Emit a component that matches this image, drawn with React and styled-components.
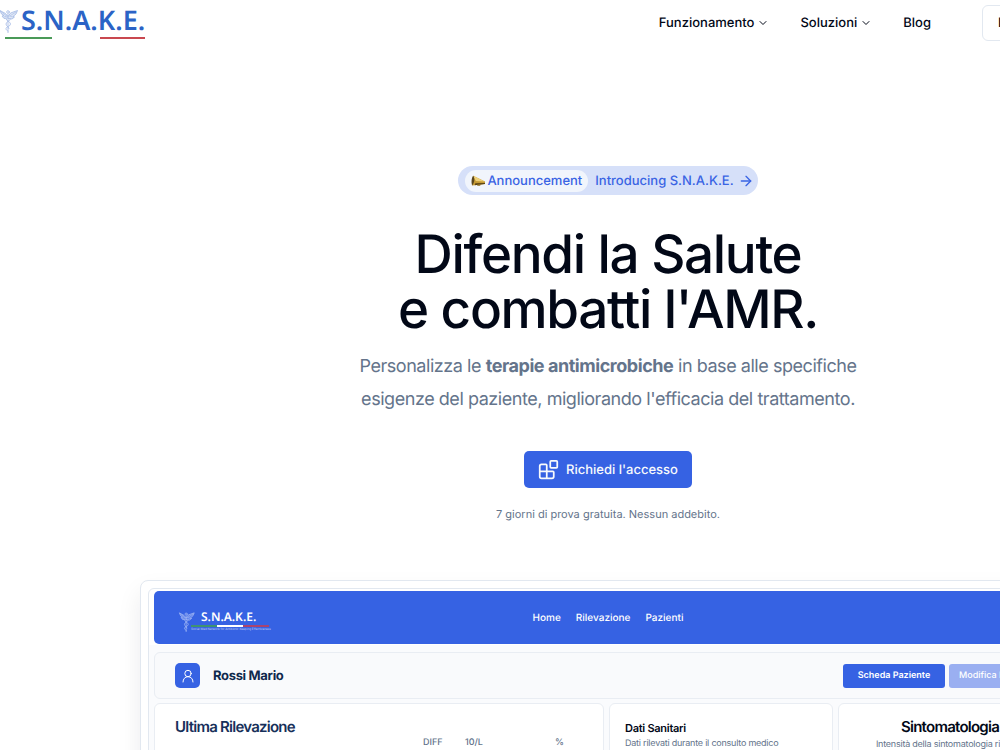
import React from "react";
import styled, { createGlobalStyle, css } from "styled-components";
import { ChevronDown, ArrowRight, Blocks } from "lucide-react";

const blue = "#3662e3";
const ink = "#020817";
const muted = "#64748b";
const line = "#e2e8f0";

const GlobalStyle = createGlobalStyle`
  *, *::before, *::after { box-sizing: border-box; }
  body { margin: 0; background: #fff; color: ${ink}; font-family: Inter, "Liberation Sans", sans-serif; text-rendering: geometricPrecision; }
  h1, h2, h3, p { margin: 0; }
  a { color: inherit; text-decoration: none; }
  button { font: inherit; text-rendering: inherit; border: 0; cursor: pointer; }
`;

const Page = styled.div`
  height: 100vh;
  overflow: hidden;
`;

const Canvas = styled.div`
  min-width: 1216px;
`;

const Header = styled.header`
  display: flex;
  align-items: center;
  justify-content: space-between;
  height: 46px;
`;

const Brand = styled.a`
  display: flex;
  align-items: flex-start;
  height: 40px;

  svg { margin-top: 3px; }
`;

const BrandName = styled.span`
  display: block;
  font-family: "Noto Sans", sans-serif;
  font-weight: 600;
  color: ${(p) => (p.$light ? "#fff" : "#2b63c6")};
  font-size: ${(p) => (p.$light ? 12 : 27)}px;
  line-height: ${(p) => (p.$light ? 16 : 34)}px;
  padding-left: ${(p) => (p.$light ? 10 : 3)}px;
`;

const BrandText = styled.span`
  display: block;
`;

const Flag = styled.span`
  display: grid;
  grid-template-columns: 47px 48px 45px;
  height: 2px;
  margin-left: -13px;

  i:nth-child(1) { background: #4a9a58; }
  i:nth-child(3) { background: #c94850; }
`;

const Nav = styled.nav`
  display: flex;
  align-items: center;
  gap: 31px;
  font-size: 13px;
  font-weight: 500;
  line-height: 21px;
  padding-right: 80px;
`;

const NavButton = styled.button`
  display: flex;
  align-items: center;
  gap: 3px;
  padding: 0;
  background: none;
  color: inherit;
`;

const LoginButton = styled.button`
  height: 36px;
  width: 154px;
  margin-left: 20px;
  padding: 0 15px;
  border: 1px solid ${line};
  border-radius: 6px;
  background: #fff;
  color: inherit;
  text-align: left;
`;

const Hero = styled.section`
  display: flex;
  flex-direction: column;
  align-items: center;
  padding-top: 120px;
  text-align: center;
`;

const Announcement = styled.a`
  display: flex;
  align-items: center;
  gap: 7px;
  height: 29px;
  padding: 0 4px 0 7px;
  border-radius: 15px;
  background: #d6e0f9;
  color: #3a64e4;
  font-size: 13px;
  font-weight: 500;
  line-height: 20px;
`;

const Tag = styled.span`
  display: flex;
  align-items: center;
  gap: 2px;
  height: 22px;
  padding: 0 6px;
  border-radius: 11px;
  background: #f1f5fc;
`;

const Intro = styled.span`
  display: flex;
  align-items: center;
  gap: 4px;
`;

const Title = styled.h1`
  margin-top: 32px;
  font-size: 53px;
  font-weight: 500;
  line-height: 55px;
  letter-spacing: -0.025em;
`;

const Lead = styled.p`
  max-width: 520px;
  margin-top: 13px;
  color: ${muted};
  font-size: 18px;
  line-height: 33px;
  letter-spacing: -0.025em;
`;

const CallToAction = styled.button`
  display: flex;
  align-items: center;
  gap: 7px;
  height: 37px;
  margin-top: 35px;
  padding: 0 14px;
  border-radius: 5px;
  background: ${blue};
  color: #f8fafc;
  font-size: 13px;
  font-weight: 500;
`;

const Note = styled.p`
  margin-top: 18px;
  color: ${muted};
  font-size: 11px;
  line-height: 16px;
`;

const Preview = styled.section`
  width: 936px;
  margin: 58px auto 0;
  padding: 7px;
  border: 1px solid ${line};
  border-radius: 8px;
  background: #fff;
  box-shadow: 0 12px 24px rgba(15, 23, 42, 0.08);
`;

const PreviewInner = styled.div`
  padding: 2px 5px 16px;
  border: 1px solid ${line};
  border-radius: 6px;
  background: linear-gradient(#fff 0, #fff 56px, #fafbfd 56px);
`;

const AppBar = styled.div`
  display: grid;
  grid-template-columns: 1fr auto 1fr;
  align-items: center;
  height: 53px;
  padding: 0 24px;
  border-radius: 5px;
  background: ${blue};
  color: #fff;
`;

const AppBrand = styled.div`
  display: flex;
  align-items: flex-start;
  padding-top: 5px;

  > span { margin-left: -5px; }
`;

const AppFlag = styled.span`
  display: grid;
  grid-template-columns: repeat(3, 26px);
  height: 2px;

  i:nth-child(1) { background: #3f9272; }
  i:nth-child(2) { background: #fff; }
  i:nth-child(3) { background: #a9446f; }
`;

const Tagline = styled.span`
  display: block;
  color: #c3d0f7;
  font-size: 3px;
  line-height: 5px;
`;

const AppLinks = styled.nav`
  display: flex;
  gap: 15px;
  font-size: 10px;
  font-weight: 500;
  line-height: 16px;
`;

const panel = css`
  border: 1px solid #e9edf3;
  border-radius: 6px;
`;

const PatientBar = styled.div`
  ${panel}
  display: flex;
  align-items: center;
  height: 47px;
  margin-top: 8px;
  padding: 0 10px 0 20px;
  background: #f9fafc;
`;

const Avatar = styled.span`
  display: grid;
  place-items: center;
  width: 25px;
  height: 25px;
  border-radius: 5px;
  background: ${blue};
`;

const PatientName = styled.h2`
  flex: 1;
  padding-left: 13px;
  color: #10294d;
  font-size: 13px;
  font-weight: 700;
  letter-spacing: -0.025em;
  text-align: left;
`;

const Actions = styled.div`
  display: flex;
  gap: 4px;
`;

const ActionButton = styled.button`
  width: 102px;
  height: 24px;
  padding: 0 10px;
  border-radius: 3px;
  background: ${(p) => (p.$soft ? "#9aaff1" : blue)};
  color: #fff;
  font-size: 9px;
  font-weight: ${(p) => (p.$soft ? 500 : 600)};
  text-align: ${(p) => (p.$soft ? "left" : "center")};
`;

const Cards = styled.div`
  display: grid;
  grid-template-columns: 450fr 224fr 224fr;
  gap: 5px;
  margin-top: 4px;
`;

const Card = styled.article`
  ${panel}
  min-height: 90px;
  padding: ${(p) => (p.$small ? "15px" : "12px 20px")};
  background: #fff;
  text-align: ${(p) => (p.$centered ? "center" : "left")};
`;

const CardTitle = styled.h3`
  color: ${(p) => (p.$navy ? "#17305a" : ink)};
  font-size: ${(p) => (p.$small ? 11 : 15)}px;
  font-weight: 600;
  line-height: ${(p) => (p.$small ? 18 : 22)}px;
  letter-spacing: ${(p) => (p.$small ? "-0.025em" : "-0.05em")};
`;

const CardNote = styled.p`
  color: ${muted};
  font-size: 9px;
  line-height: 14px;
  letter-spacing: -0.025em;
`;

const Values = styled.table`
  width: 100%;
  border-collapse: collapse;
  table-layout: fixed;
  color: ${muted};
  font-size: 9px;
  line-height: 10px;

  th { padding: 0; font-weight: 500; text-align: left; }
`;

const Caduceus = ({ color, width, height }) => (
  <svg width={width} height={height} viewBox="0 0 18 27" fill="none" stroke={color} strokeLinecap="round" strokeLinejoin="round" aria-hidden="true">
    <circle cx="8" cy="6" r="1.3" strokeWidth=".8" />
    <path d="M7.500 10 5.500 7.500 0 4.500 1.500 8l2.500 1.500L2 10l2 2.500 3.500-.5 1.500.5 3 .5 2.500-2-1.500-.5L16 8l1.500-3.500L10.500 7 8.500 10Z" strokeWidth=".8" fill={color} fillOpacity=".35" />
    <path d="M1.500 6 6 9.500M16 6l-5.500 3.500M4 11l3-1M13 11l-3.500-1" strokeWidth=".6" />
    <path d="M8 8v19" strokeWidth=".8" />
    <path d="M6 13c0 2 4.500 2.500 4.500 5S6 20.500 6 22.500c0 1.500 1 2 2 2.500M10.500 13C10.500 15 6 15.500 6 18s3 2.500 3 4.500" strokeWidth=".8" />
  </svg>
);

const Megaphone = () => (
  <svg width="14" height="14" viewBox="0 1 13 12" aria-hidden="true">
    <path d="M2 2.200 13 7.500v2.200L1 11.200Z" fill="#c49a35" />
    <path d="m2 2.200 10.800 5.300L4.500 7Z" fill="#eed078" />
    <path d="M2 2.200C3.600 4.500 3.500 8.500 1 11.200 0 8 .6 4 2 2.200Z" fill="#58451e" />
    <path d="m4 9 9-.2v.9L3.500 11Z" fill="#5a4212" />
    <path d="M5.500 10.500 9 10l-.5 1.500H6Z" fill="#8d6c20" />
  </svg>
);

const Person = () => (
  <svg width="14" height="14" viewBox="0 0 14 14" fill="none" stroke="#fff" strokeLinecap="round" aria-hidden="true">
    <circle cx="7" cy="4.500" r="3.200" />
    <path d="M2 13c0-3 2-5.300 5-5.300s5 2.300 5 5.300" />
  </svg>
);

export default function App() {
  return (
    <Page>
      <GlobalStyle />
      <Canvas>
        <Header>
          <Brand href="#" aria-label="S.N.A.K.E.">
            <Caduceus color="#a3b9e4" width={18} height={27} />
            <BrandText>
              <BrandName>S.N.A.K.E.</BrandName>
              <Flag><i /><i /><i /></Flag>
            </BrandText>
          </Brand>
          <Nav>
            <NavButton>Funzionamento <ChevronDown size={12} /></NavButton>
            <NavButton>Soluzioni <ChevronDown size={12} /></NavButton>
            <a href="#blog">Blog</a>
            <LoginButton>Login</LoginButton>
          </Nav>
        </Header>

        <main>
          <Hero>
            <Announcement href="#announcement">
              <Tag><Megaphone />Announcement</Tag>
              <Intro>Introducing S.N.A.K.E. <ArrowRight size={16} /></Intro>
            </Announcement>
            <Title>Difendi la Salute<br />e combatti l'AMR.</Title>
            <Lead>
              Personalizza le <strong>terapie antimicrobiche</strong> in base alle specifiche
              esigenze del paziente, migliorando l'efficacia del trattamento.
            </Lead>
            <CallToAction><Blocks size={21} />Richiedi l'accesso</CallToAction>
            <Note>7 giorni di prova gratuita. Nessun addebito.</Note>
          </Hero>

          <Preview>
            <PreviewInner>
              <AppBar>
                <AppBrand>
                  <Caduceus color="#a9bdf6" width={18} height={23} />
                  <BrandText>
                    <BrandName $light>S.N.A.K.E.</BrandName>
                    <AppFlag><i /><i /><i /></AppFlag>
                    <Tagline>Social Med Network for Antibiotic Keeping Effectiveness</Tagline>
                  </BrandText>
                </AppBrand>
                <AppLinks>
                  <a href="#home">Home</a>
                  <a href="#rilevazione">Rilevazione</a>
                  <a href="#pazienti">Pazienti</a>
                </AppLinks>
              </AppBar>
              <PatientBar>
                <Avatar><Person /></Avatar>
                <PatientName>Rossi Mario</PatientName>
                <Actions>
                  <ActionButton>Scheda Paziente</ActionButton>
                  <ActionButton $soft>Modifica Dati</ActionButton>
                </Actions>
              </PatientBar>
              <Cards>
                <Card>
                  <CardTitle $navy>Ultima Rilevazione</CardTitle>
                  <Values>
                    <colgroup>
                      <col /><col width="42" /><col width="90" /><col width="28" />
                    </colgroup>
                    <thead>
                      <tr><th aria-label="Esame" /><th>DIFF</th><th>10/L</th><th>%</th></tr>
                    </thead>
                  </Values>
                </Card>
                <Card $small>
                  <CardTitle $small>Dati Sanitari</CardTitle>
                  <CardNote>Dati rilevati durante il consulto medico</CardNote>
                </Card>
                <Card $centered>
                  <CardTitle>Sintomatologia</CardTitle>
                  <CardNote>Intensità della sintomatologia rilevata</CardNote>
                </Card>
              </Cards>
            </PreviewInner>
          </Preview>
        </main>
      </Canvas>
    </Page>
  );
}
